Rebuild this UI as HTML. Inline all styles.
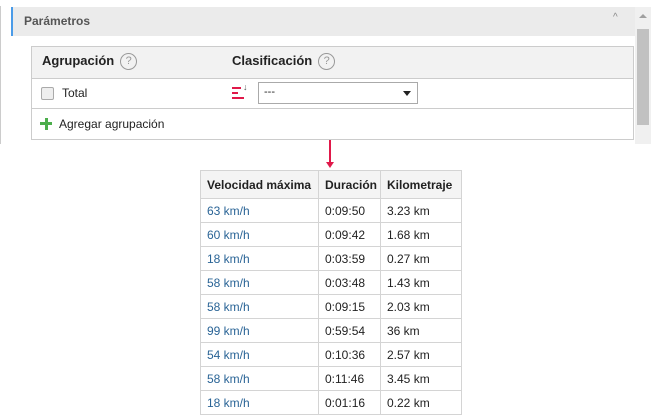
<!DOCTYPE html>
<html><head><style>
body{margin:0;width:662px;height:418px;background:#fff;font-family:"Liberation Sans",sans-serif;font-size:12px;color:#222;position:relative;overflow:hidden}
.a{position:absolute}
.q{display:inline-block;width:15px;height:15px;border:1px solid #999;border-radius:50%;color:#999;font-size:11px;text-align:center;line-height:15px;font-weight:normal;vertical-align:middle;margin-left:6px}
table{border-collapse:collapse;position:absolute;left:200px;top:170px;table-layout:fixed;width:261px}
td,th{border:1px solid #d4d4d4;height:23px;padding:0 6px;text-align:left;font-size:12px;white-space:nowrap;overflow:hidden}
th{background:#f4f4f4;height:27px;font-weight:bold;color:#222}
td:first-child{color:#2a6496}
</style></head><body>
<div class="a" style="left:0;top:6px;width:1px;height:138px;background:#ccc"></div>
<div class="a" style="left:11px;top:7px;width:623px;height:29px;background:#ebebeb;border-left:2px solid #4a9be8"></div>
<div class="a" style="left:24px;top:14px;font-weight:bold;color:#555;font-size:12px">Parámetros</div>
<div class="a" style="left:613px;top:12px;color:#888;font-size:10px">^</div>
<div class="a" style="left:635px;top:7px;width:16px;height:137px;background:#f0f0f0"></div>
<div class="a" style="left:637px;top:29px;width:12px;height:96px;background:#c1c1c1"></div>
<div class="a" style="left:639px;top:14px;width:0;height:0;border-left:4px solid transparent;border-right:4px solid transparent;border-bottom:4px solid #a0a0a0"></div>
<div class="a" style="left:31px;top:46px;width:601px;height:92px;border:1px solid #ccc"></div>
<div class="a" style="left:32px;top:47px;width:601px;height:31px;background:#f2f2f2;border-bottom:1px solid #ccc"></div>
<div class="a" style="left:32px;top:108px;width:601px;height:1px;background:#ccc"></div>
<div class="a" style="left:42px;top:53px;font-weight:bold;font-size:13px">Agrupación<span class="q">?</span></div>
<div class="a" style="left:232px;top:53px;font-weight:bold;font-size:13px">Clasificación<span class="q">?</span></div>
<div class="a" style="left:41px;top:87px;width:11px;height:11px;border:1px solid #aaa;border-radius:2px;background:#eee"></div>
<div class="a" style="left:62px;top:86px;font-size:12px">Total</div>
<div class="a" style="left:232px;top:87px;width:9px;height:2px;background:#e0194a"></div>
<div class="a" style="left:232px;top:92px;width:6px;height:2px;background:#e0194a"></div>
<div class="a" style="left:232px;top:97px;width:12px;height:2px;background:#e0194a"></div>
<div class="a" style="left:243px;top:82px;font-size:9px;color:#555">↓</div>
<div class="a" style="left:258px;top:82px;width:158px;height:20px;border:1px solid #aaa;background:#fff"></div>
<div class="a" style="left:264px;top:86px;font-size:11px">---</div>
<div class="a" style="left:403px;top:91px;border-left:4px solid transparent;border-right:4px solid transparent;border-top:5px solid #222"></div>
<div class="a" style="left:40px;top:122px;width:12px;height:3px;background:#4cae4c"></div>
<div class="a" style="left:44.5px;top:117.5px;width:3px;height:12px;background:#4cae4c"></div>
<div class="a" style="left:59px;top:117px;font-size:12px">Agregar agrupación</div>
<div class="a" style="left:329px;top:140px;width:2px;height:25px;background:#e0194a"></div>
<div class="a" style="left:326px;top:162px;border-left:4px solid transparent;border-right:4px solid transparent;border-top:6px solid #e0194a"></div>
<table>
<colgroup><col style="width:118px"><col style="width:62px"><col style="width:81px"></colgroup>
<tr><th>Velocidad máxima</th><th>Duración</th><th>Kilometraje</th></tr>
<tr><td>63 km/h</td><td>0:09:50</td><td>3.23 km</td></tr>
<tr><td>60 km/h</td><td>0:09:42</td><td>1.68 km</td></tr>
<tr><td>18 km/h</td><td>0:03:59</td><td>0.27 km</td></tr>
<tr><td>58 km/h</td><td>0:03:48</td><td>1.43 km</td></tr>
<tr><td>58 km/h</td><td>0:09:15</td><td>2.03 km</td></tr>
<tr><td>99 km/h</td><td>0:59:54</td><td>36 km</td></tr>
<tr><td>54 km/h</td><td>0:10:36</td><td>2.57 km</td></tr>
<tr><td>58 km/h</td><td>0:11:46</td><td>3.45 km</td></tr>
<tr><td>18 km/h</td><td>0:01:16</td><td>0.22 km</td></tr>
</table>
</body></html>
